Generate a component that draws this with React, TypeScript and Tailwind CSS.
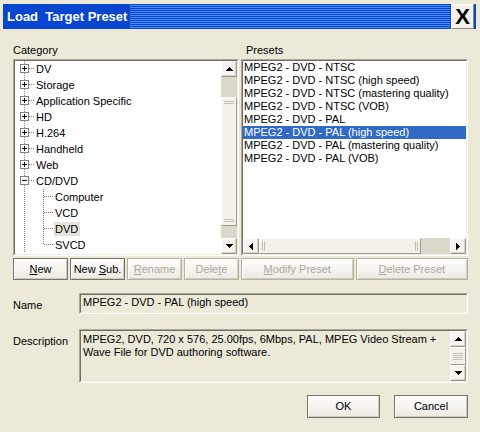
import React from 'react';

// tiny black arrow used in scrollbar buttons
function Arrow({ dir }: { dir: 'up' | 'down' | 'left' | 'right' }) {
  if (dir === 'up')
    return (
      <svg width="7" height="4" shapeRendering="crispEdges">
        <polygon points="3.5,0 7,4 0,4" fill="#000" />
      </svg>
    );
  if (dir === 'down')
    return (
      <svg width="7" height="4" shapeRendering="crispEdges">
        <polygon points="0,0 7,0 3.5,4" fill="#000" />
      </svg>
    );
  if (dir === 'left')
    return (
      <svg width="4" height="7" shapeRendering="crispEdges">
        <polygon points="4,0 4,7 0,3.5" fill="#000" />
      </svg>
    );
  return (
    <svg width="4" height="7" shapeRendering="crispEdges">
      <polygon points="0,0 4,3.5 0,7" fill="#000" />
    </svg>
  );
}

function SbButton({ dir }: { dir: 'up' | 'down' | 'left' | 'right' }) {
  return (
    <div className="w-[16px] h-[16px] shrink-0 flex items-center justify-center bg-[#F5F4EE] border border-t-white border-l-white border-b-[#9D9A8C] border-r-[#9D9A8C] shadow-[inset_-1px_-1px_0_#D6D3C6]">
      <Arrow dir={dir} />
    </div>
  );
}

function Grip({ vertical }: { vertical: boolean }) {
  return vertical ? (
    <div className="flex flex-col gap-[1px] px-[2px]">
      <div className="h-[1px] bg-[#C3C0B1]" />
      <div className="h-[1px] bg-[#C3C0B1]" />
    </div>
  ) : (
    <div className="flex gap-[1px] py-[2px] h-full">
      <div className="w-[1px] bg-[#C3C0B1]" />
      <div className="w-[1px] bg-[#C3C0B1]" />
    </div>
  );
}

function Sunken({ className = '', children }: { className?: string; children?: React.ReactNode }) {
  return (
    <div className={`border border-t-[#ACA899] border-l-[#ACA899] border-b-white border-r-white ${className}`}>
      <div className="h-full w-full border border-t-[#716F64] border-l-[#716F64] border-b-[#F1EFE2] border-r-[#F1EFE2] flex overflow-hidden">
        {children}
      </div>
    </div>
  );
}

function Btn({ children, disabled, className = '' }: { children: React.ReactNode; disabled?: boolean; className?: string }) {
  return (
    <div
      className={`flex items-center justify-center h-full border ${disabled ? 'border-[#B5B2A4] text-[#ACA899]' : 'border-[#76746A] text-black'} bg-[linear-gradient(#FDFDFB,#ECEAE1)] shadow-[inset_1px_1px_0_#fff,inset_-1px_-1px_0_#CFCCBF] ${className}`}
    >
      {children}
    </div>
  );
}

function RootRow({ label, open }: { label: string; open?: boolean }) {
  return (
    <div className="flex h-[16px] items-center">
      <svg width="21" height="16" className="shrink-0" shapeRendering="crispEdges">
        <line x1="9.5" y1="0" x2="9.5" y2="16" stroke="#808080" strokeDasharray="1 1" />
        <line x1="14" y1="7.5" x2="20" y2="7.5" stroke="#808080" strokeDasharray="1 1" />
        <rect x="5.5" y="3.5" width="8" height="8" fill="#fff" stroke="#808080" />
        <line x1="7" y1="7.5" x2="12" y2="7.5" stroke="#000" />
        {!open && <line x1="9.5" y1="5" x2="9.5" y2="10" stroke="#000" />}
      </svg>
      <span>{label}</span>
    </div>
  );
}

function ChildRow({ label, last, selected }: { label: string; last?: boolean; selected?: boolean }) {
  return (
    <div className="flex h-[16px] items-center">
      <svg width="39" height="16" className="shrink-0" shapeRendering="crispEdges">
        <line x1="9.5" y1="0" x2="9.5" y2="16" stroke="#808080" strokeDasharray="1 1" />
        <line x1="28.5" y1="0" x2="28.5" y2={last ? 8 : 16} stroke="#808080" strokeDasharray="1 1" />
        <line x1="29" y1="7.5" x2="39" y2="7.5" stroke="#808080" strokeDasharray="1 1" />
      </svg>
      <span className={`pl-[1px] pr-[2px] leading-[14px] ${selected ? 'bg-[#E6E3D8]' : ''}`}>{label}</span>
    </div>
  );
}

const presets = [
  'MPEG2 - DVD - NTSC',
  'MPEG2 - DVD - NTSC (high speed)',
  'MPEG2 - DVD - NTSC (mastering quality)',
  'MPEG2 - DVD - NTSC (VOB)',
  'MPEG2 - DVD - PAL',
  'MPEG2 - DVD - PAL (high speed)',
  'MPEG2 - DVD - PAL (mastering quality)',
  'MPEG2 - DVD - PAL (VOB)',
];

export default function App() {
  return (
    <div className="w-[480px] h-[432px] bg-[#ECE9D8] pt-[4px] font-['Liberation_Sans',Arial,sans-serif] text-[11px] leading-[13px] text-black select-none">
      {/* Title bar */}
      <div className="ml-[3px] w-[473px] h-[25px] flex bg-[#0846D0]">
        <div className="w-[127px] shrink-0 pl-[4px] flex items-center text-white font-bold text-[13px] whitespace-pre">
          Load  Target Preset
        </div>
        <div className="flex-1 my-[1px] bg-[repeating-linear-gradient(to_bottom,#4A8AF4_0px,#4A8AF4_1px,#0846D0_1px,#0846D0_2px)]" />
        <div className="w-[23px] h-full shrink-0 ml-[1px] flex items-center justify-center bg-[#F2F1EB] border border-t-white border-l-white border-b-[#8E8B7D] border-r-[#8E8B7D] text-[22px] leading-none font-bold">
          X
        </div>
        <div className="w-[2px] shrink-0" />
      </div>

      <div className="pl-[13px] pr-[12px]">
        {/* Labels */}
        <div className="mt-[15px] h-[13px] flex gap-[2px]">
          <div className="w-[226px]">Category</div>
          <div className="flex-1 pl-[5px]">Presets</div>
        </div>

        {/* Lists */}
        <div className="mt-[2px] h-[197px] flex gap-[2px]">
          <Sunken className="w-[226px] h-full">
            <div className="flex-1 bg-white">
              <RootRow label="DV" />
              <RootRow label="Storage" />
              <RootRow label="Application Specific" />
              <RootRow label="HD" />
              <RootRow label="H.264" />
              <RootRow label="Handheld" />
              <RootRow label="Web" />
              <RootRow label="CD/DVD" open />
              <ChildRow label="Computer" />
              <ChildRow label="VCD" />
              <ChildRow label="DVD" selected />
              <ChildRow label="SVCD" last />
            </div>
            <div className="w-[16px] flex flex-col">
              <SbButton dir="up" />
              <div className="h-[20px] bg-[#DAD7CB]" />
              <div className="h-[129px] bg-[#F2F1EA] border border-t-white border-l-white border-b-[#9D9A8C] border-r-[#9D9A8C] flex flex-col justify-between py-[3px]">
                <Grip vertical />
                <Grip vertical />
              </div>
              <div className="flex-1 bg-[#DAD7CB]" />
              <SbButton dir="down" />
            </div>
          </Sunken>

          <Sunken className="flex-1 h-full">
            <div className="flex-1 flex flex-col bg-white">
              <div className="flex-1">
                {presets.map((p, i) => (
                  <div
                    key={p}
                    className={`h-[13px] pl-[1px] whitespace-nowrap ${i === 5 ? 'bg-[#316AC5] text-white' : ''}`}
                  >
                    {p}
                  </div>
                ))}
              </div>
              <div className="h-[16px] flex">
                <SbButton dir="left" />
                <div className="w-[162px] bg-[#F2F1EA] border border-t-white border-l-white border-b-[#9D9A8C] border-r-[#9D9A8C] flex justify-between px-[2px]">
                  <Grip vertical={false} />
                  <Grip vertical={false} />
                </div>
                <div className="flex-1 bg-[#DAD7CB]" />
                <SbButton dir="right" />
              </div>
            </div>
          </Sunken>
        </div>

        {/* List buttons */}
        <div className="mt-[2px] h-[22px] flex gap-[2px]">
          <div className="w-[226px] flex gap-[2px]">
            <Btn className="w-[55px]">
              <span><u>N</u>ew</span>
            </Btn>
            <Btn className="w-[55px]">
              <span>New <u>S</u>ub.</span>
            </Btn>
            <Btn className="w-[55px]" disabled>
              <span><u>R</u>ename</span>
            </Btn>
            <Btn className="w-[55px]" disabled>
              <span>Dele<u>t</u>e</span>
            </Btn>
          </div>
          <div className="flex-1 flex gap-[2px]">
            <Btn className="flex-1" disabled>
              <span><u>M</u>odify Preset</span>
            </Btn>
            <Btn className="flex-1" disabled>
              <span><u>D</u>elete Preset</span>
            </Btn>
          </div>
        </div>

        {/* Name */}
        <div className="mt-[13px] h-[21px] flex">
          <div className="w-[66px] pt-[6px]">Name</div>
          <Sunken className="flex-1 h-full">
            <div className="flex-1 bg-[#ECE9D8] pl-[2px] pt-[1px] whitespace-nowrap">MPEG2 - DVD - PAL (high speed)</div>
          </Sunken>
        </div>

        {/* Description */}
        <div className="mt-[15px] h-[54px] flex">
          <div className="w-[66px] pt-[6px]">Description</div>
          <Sunken className="flex-1 h-full">
            <div className="flex-1 bg-[#ECE9D8] pl-[2px] pt-[2px] pr-[2px]">
              MPEG2, DVD, 720 x 576, 25.00fps, 6Mbps, PAL, MPEG Video Stream +<br />
              Wave File for DVD authoring software.
            </div>
            <div className="w-[16px] flex flex-col">
              <SbButton dir="up" />
              <div className="flex-1 bg-[#F2F1EA] border border-t-white border-l-white border-b-[#9D9A8C] border-r-[#9D9A8C] flex flex-col justify-center">
                <div className="flex flex-col gap-[1px] px-[2px]">
                  <div className="h-[1px] bg-[#C3C0B1]" />
                  <div className="h-[1px] bg-[#C3C0B1]" />
                  <div className="h-[1px] bg-[#C3C0B1]" />
                  <div className="h-[1px] bg-[#C3C0B1]" />
                </div>
              </div>
              <SbButton dir="down" />
            </div>
          </Sunken>
        </div>

        {/* OK / Cancel */}
        <div className="mt-[12px] h-[23px] flex justify-end gap-[14px]">
          <Btn className="w-[73px]">OK</Btn>
          <Btn className="w-[74px]">Cancel</Btn>
        </div>
      </div>
    </div>
  );
}
